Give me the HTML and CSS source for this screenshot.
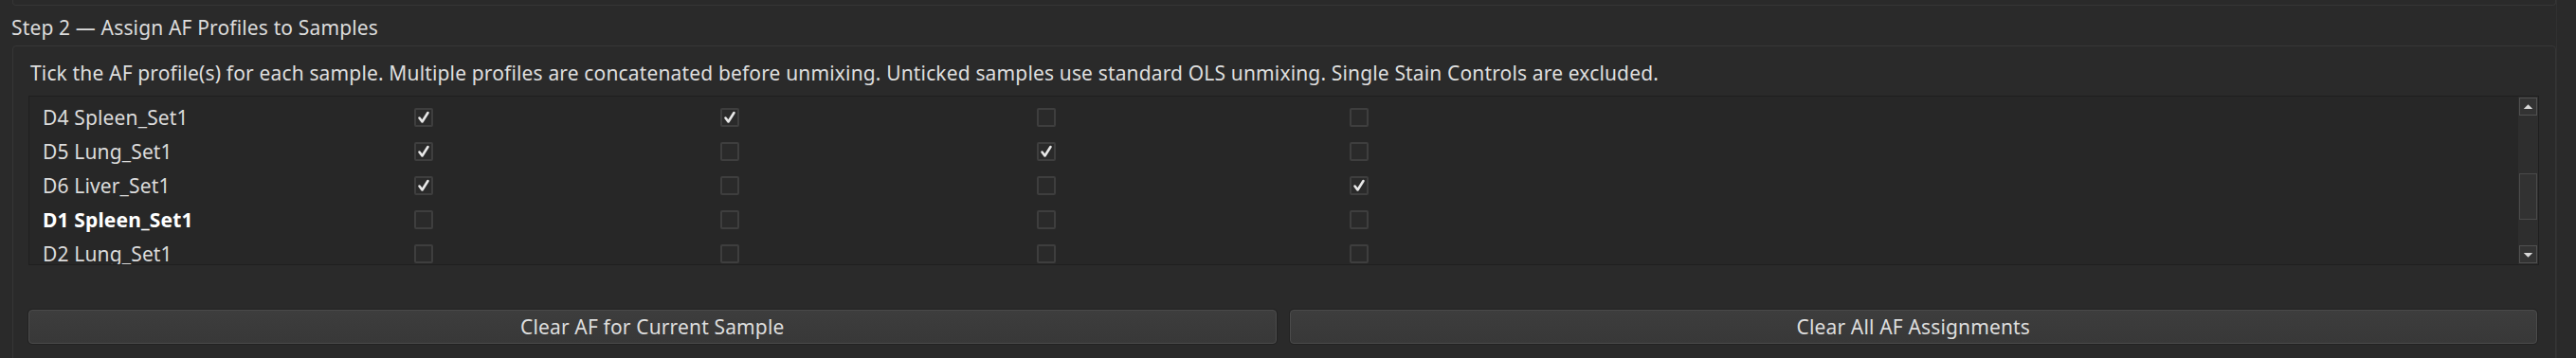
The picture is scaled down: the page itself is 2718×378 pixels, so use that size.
FILE: index.html
```html
<!DOCTYPE html>
<html>
<head>
<meta charset="utf-8">
<link rel="stylesheet" href="styles.css">
</head>
<body>
<div class="page">
  <div class="main">
    <div class="top-frame"></div>
    <div class="step-title">Step 2 — Assign AF Profiles to Samples</div>
    <div class="group">
      <div class="desc">Tick the AF profile(s) for each sample. Multiple profiles are concatenated before unmixing. Unticked samples use standard OLS unmixing. Single Stain Controls are excluded.</div>
      <div class="table">
        <div class="rows">
          <div class="row"><div class="name">D4 Spleen_Set1</div><div class="cell"><span class="cb on"><svg viewBox="0 0 20 20"><polyline points="5.5,10.5 8.5,14.5 14.5,5"/></svg></span></div><div class="cell c2"><span class="cb on"><svg viewBox="0 0 20 20"><polyline points="5.5,10.5 8.5,14.5 14.5,5"/></svg></span></div><div class="cell c3"><span class="cb"></span></div><div class="cell c4"><span class="cb"></span></div></div>
          <div class="row"><div class="name">D5 Lung_Set1</div><div class="cell"><span class="cb on"><svg viewBox="0 0 20 20"><polyline points="5.5,10.5 8.5,14.5 14.5,5"/></svg></span></div><div class="cell c2"><span class="cb"></span></div><div class="cell c3"><span class="cb on"><svg viewBox="0 0 20 20"><polyline points="5.5,10.5 8.5,14.5 14.5,5"/></svg></span></div><div class="cell c4"><span class="cb"></span></div></div>
          <div class="row"><div class="name">D6 Liver_Set1</div><div class="cell"><span class="cb on"><svg viewBox="0 0 20 20"><polyline points="5.5,10.5 8.5,14.5 14.5,5"/></svg></span></div><div class="cell c2"><span class="cb"></span></div><div class="cell c3"><span class="cb"></span></div><div class="cell c4"><span class="cb on"><svg viewBox="0 0 20 20"><polyline points="5.5,10.5 8.5,14.5 14.5,5"/></svg></span></div></div>
          <div class="row"><div class="name bold">D1 Spleen_Set1</div><div class="cell"><span class="cb"></span></div><div class="cell c2"><span class="cb"></span></div><div class="cell c3"><span class="cb"></span></div><div class="cell c4"><span class="cb"></span></div></div>
          <div class="row"><div class="name">D2 Lung_Set1</div><div class="cell"><span class="cb"></span></div><div class="cell c2"><span class="cb"></span></div><div class="cell c3"><span class="cb"></span></div><div class="cell c4"><span class="cb"></span></div></div>
        </div>
        <div class="vscroll">
          <div class="sbtn"><svg viewBox="0 0 18 18"><polygon points="4,11 14,11 9,6"/></svg></div>
          <div class="track">
            <div class="track-gap"></div>
            <div class="handle"></div>
            <div class="track-rest"></div>
          </div>
          <div class="sbtn"><svg viewBox="0 0 18 18"><polygon points="4,7 14,7 9,12"/></svg></div>
        </div>
      </div>
      <div class="buttons">
        <button class="btn">Clear AF for Current Sample</button>
        <button class="btn">Clear All AF Assignments</button>
      </div>
    </div>
  </div>
  <div class="side"></div>
</div>
</body>
</html>
```

FILE: styles.css
```css
html, body {
  margin: 0;
  padding: 0;
  background: #2a2a2a;
  overflow: hidden;
}
body {
  width: 2718px;
  height: 378px;
  font-family: "Noto Sans", "Open Sans", sans-serif;
  font-size: 21px;
  letter-spacing: 0.15px;
  color: #dedede;
}
.page {
  display: flex;
  height: 378px;
}
.main {
  width: 2697px;
  flex: none;
}
.side {
  flex: 1;
  border-left: 1px solid #313131;
  background: #2a2a2a;
}
.top-frame {
  margin-left: 13px;
  width: 2682px;
  height: 5px;
  border: 1px solid #363636;
  border-top: none;
  border-radius: 0 0 4px 4px;
}
.step-title {
  margin-top: 11px;
  padding-left: 12px;
  line-height: 24px;
  height: 24px;
  color: #dcdcdc;
  white-space: nowrap;
}
.group {
  margin-top: 7px;
  margin-left: 13px;
  width: 2684px;
  height: 400px;
  border: 1px solid #363636;
  border-radius: 4px;
  padding: 16px 17px 0 16px;
  box-sizing: border-box;
}
.desc {
  padding-left: 2px;
  line-height: 24px;
  height: 24px;
  white-space: nowrap;
  color: #dedede;
}
.table {
  margin-top: 12px;
  height: 179px;
  box-sizing: border-box;
  border: 1px solid #1f1f1f;
  background: #272727;
  display: flex;
}
.rows {
  flex: 1;
  overflow: hidden;
  padding-top: 4px;
}
.row {
  display: grid;
  grid-template-columns: 399px 323px 334px 330px 1fr;
  height: 36px;
  align-items: center;
}
.name {
  padding-left: 14px;
  white-space: nowrap;
  color: #dcdcdc;
}
.name.bold {
  font-weight: 700;
  color: #ffffff;
}
.cell {
  padding-left: 7px;
  display: flex;
  align-items: center;
}
.cb {
  width: 20px;
  height: 20px;
  box-sizing: border-box;
  border: 2px solid #3e3e3e;
  border-radius: 2px;
  background: #2a2a2a;
  display: block;
  position: relative;
}
.cb svg {
  position: absolute;
  left: -2px;
  top: -2px;
  width: 20px;
  height: 20px;
}
.cb polyline {
  fill: none;
  stroke: #e8e8e8;
  stroke-width: 2.6;
  stroke-linecap: round;
  stroke-linejoin: round;
}
.vscroll {
  width: 21px;
  flex: none;
  background: #2e2e2e;
  display: flex;
  flex-direction: column;
  padding: 1px 1px;
  box-sizing: border-box;
}
.sbtn {
  height: 19px;
  flex: none;
  box-sizing: border-box;
  border: 1px solid #505050;
  background: #333333;
  display: flex;
  align-items: center;
  justify-content: center;
}
.sbtn svg {
  width: 18px;
  height: 18px;
}
.sbtn polygon {
  fill: #d8d8d8;
}
.track {
  flex: 1;
  display: flex;
  flex-direction: column;
}
.track-gap {
  height: 61px;
}
.handle {
  height: 49px;
  box-sizing: border-box;
  border: 1px solid #4a4a4a;
  background: #323232;
}
.track-rest {
  flex: 1;
}
.buttons {
  margin-top: 47px;
  display: flex;
  gap: 14px;
  padding-right: 2px;
}
.btn {
  flex: 1;
  height: 36px;
  box-sizing: border-box;
  border: 1px solid #4b4b4b;
  border-radius: 4px;
  background: linear-gradient(#3d3d3d, #383838);
  box-shadow: 0 0 0 1px #222222;
  color: #dedede;
  font-family: "Noto Sans", "Open Sans", sans-serif;
  font-size: 21px;
  letter-spacing: 0.15px;
  padding: 0;
  line-height: 32px;
}
```
